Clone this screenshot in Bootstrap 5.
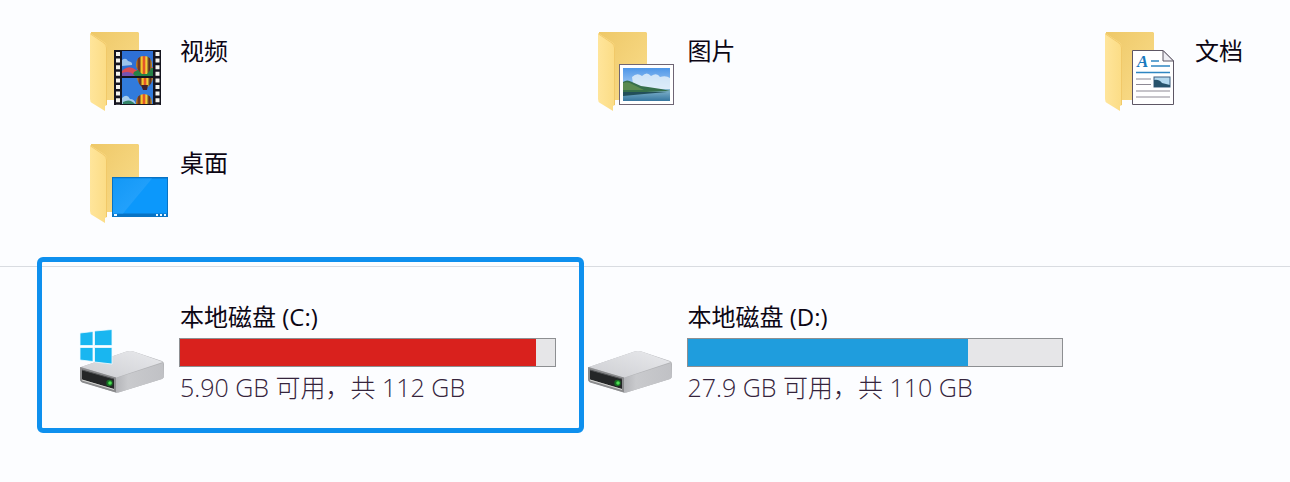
<!DOCTYPE html>
<html lang="zh-CN">
<head>
<meta charset="utf-8">
<meta name="viewport" content="width=device-width, initial-scale=1">
<title>此电脑</title>
<link href="https://cdn.jsdelivr.net/npm/bootstrap@5.3.0/dist/css/bootstrap.min.css" rel="stylesheet">
<script src="https://cdn.jsdelivr.net/npm/bootstrap@5.3.0/dist/js/bootstrap.bundle.min.js"></script>
<style>
  body { background: #fcfdff; color: #0c0614; font-family: "Open Sans", "Noto Sans CJK SC", sans-serif; font-size: 24px; line-height: 32px; }
  .tiles { display: grid; grid-template-columns: 5fr 5fr 2fr; padding-left: 72px; row-gap: 28px; }
  .folders { padding-top: 28px; padding-bottom: 42px; }
  .drives { padding-top: 34px; padding-bottom: 48px; border-top: 1px solid #d9dce1; }
  .tile { padding-left: 4px; color: inherit; }
  .tile-icon { width: 96px; height: 84px; }
  .tile-name { padding-top: 7px; }
  .drive-icon { margin-top: 13px; }
  .usage { height: 29px; margin: 5px 24px 4px -1px; border: 1px solid #8d8f92; border-radius: 0; background: #e6e6e8; }
  .usage-full { background: #d9211d; }
  .usage-ok { background: #1f9ddd; }
  .free-space { color: #35243c; font-size: 25px; font-weight: 300; }
  .highlight { inset: -44px -4px -30px -35px; border: 5px solid #0e90ee; border-radius: 6px; pointer-events: none; }
</style>
</head>
<body>
<svg width="0" height="0" class="position-absolute" aria-hidden="true">
  <defs>
    <linearGradient id="backFill" x1="0" y1="0" x2="1" y2="1"><stop offset="0" stop-color="#eec868"/><stop offset="1" stop-color="#fadd8b"/></linearGradient>
    <linearGradient id="flapFill" x1="0" y1="0" x2="1" y2="0"><stop offset="0" stop-color="#ffe59b"/><stop offset="1" stop-color="#fbdc85"/></linearGradient>
    <linearGradient id="screenFill" x1="0" y1="0" x2="1" y2="1"><stop offset="0" stop-color="#1398f6"/><stop offset="1" stop-color="#2ba6ff"/></linearGradient>
    <linearGradient id="skyFill" x1="0" y1="0" x2="0" y2="1"><stop offset="0" stop-color="#4d96e8"/><stop offset="1" stop-color="#e8f4fc"/></linearGradient>
    <linearGradient id="lakeFill" x1="0" y1="0" x2="0" y2="1"><stop offset="0" stop-color="#88b9d0"/><stop offset="1" stop-color="#36769f"/></linearGradient>
    <linearGradient id="topFill" x1="0" y1="1" x2="1" y2="0"><stop offset="0" stop-color="#cdced2"/><stop offset="1" stop-color="#e9eaed"/></linearGradient>
    <linearGradient id="sideFill" x1="0" y1="0" x2="1" y2="0"><stop offset="0" stop-color="#b4b5b9"/><stop offset=".25" stop-color="#c9cacd"/><stop offset="1" stop-color="#c0c1c5"/></linearGradient>
    <linearGradient id="balloonFill" x1="0" y1="0" x2="1" y2="0"><stop offset="0" stop-color="#d48a18"/><stop offset=".2" stop-color="#5c2220"/><stop offset=".36" stop-color="#ffda2c"/><stop offset=".5" stop-color="#db2e25"/><stop offset=".64" stop-color="#ffe13a"/><stop offset=".82" stop-color="#4b2024"/><stop offset="1" stop-color="#d99d22"/></linearGradient>
    <clipPath id="frameOne"><rect x="46" y="23" width="31" height="25"/></clipPath>
    <clipPath id="frameTwo"><rect x="46" y="50" width="31" height="26"/></clipPath>
    <symbol id="folder" viewBox="0 0 96 84">
      <path d="M15 4H62L63 5V72H15Z" fill="url(#backFill)"/>
      <path d="M14 5L28 14Q31 16 31 20V77L29 78V83L16 75Q14 74 14 71Z" fill="url(#flapFill)"/>
      <path d="M14.500 6L28 15Q30.500 17 30.500 20V77" fill="none" stroke="#efc462" stroke-width=".8"/>
    </symbol>
    <symbol id="drive" viewBox="0 0 96 84">
      <path d="M5 53L49 38Q54 36 59 38L86 47Q88 48 88 50V62Q88 64 86 65L44 78Q41 79 38 78L6 68Q4 67 4 65V54Z" fill="#b2b3b6"/>
      <path d="M5 53L49 38Q54 36 59 38L87 48L42 63Q40 64 37 63Z" fill="url(#topFill)"/>
      <path d="M40 64L87 49L88 62Q88 64 86 65L44 78L40 79Z" fill="url(#sideFill)"/>
      <path d="M4 53L40 63.500V78.500L6 68.500Q4 68 4 65Z" fill="#8a8b8d"/>
      <path d="M6 56L38 65V75L6 65.500Z" fill="#242627"/>
      <path d="M6 66L38 75.500" stroke="#d6d6d3" stroke-width="1"/>
      <path d="M6 56L38 65" stroke="#515355" stroke-width="1"/>
      <circle cx="33.500" cy="69" r="3.200" fill="#176d23"/><circle cx="34" cy="69" r="1.800" fill="#4de052"/>
    </symbol>
  </defs>
</svg>

<main class="min-vh-100">
  <section class="tiles folders" aria-label="文件夹">
    <a href="#videos" class="tile d-flex gap-2 text-decoration-none">
      <svg class="tile-icon flex-shrink-0" viewBox="0 0 96 84" aria-hidden="true">
        <use href="#folder"/>
        <rect x="38" y="22" width="47" height="55" fill="#15151f"/>
        <path d="M42 24V77M81.500 24V77" stroke="#f3f3ee" stroke-width="4" stroke-dasharray="4 2.600"/>
        <g clip-path="url(#frameOne)">
          <rect x="46" y="23" width="31" height="25" fill="#2e70d5"/>
          <path d="M46 32q4-3 6 1q5 1 4 4l-10 1z" fill="#9cc4ec"/>
          <path d="M46 43q7-7 14-1l17-3v10H46Z" fill="#d84b55"/><path d="M58 44q10-6 19-4v9H56z" fill="#258246"/>
          <path d="M46 45q8-3 13 3H46z" fill="#7652b0"/>
          <path d="M60 37Q60 28 68 28T76 37Q76 41 71 46H66Q60 41 60 37Z" fill="url(#balloonFill)"/>
        </g>
        <g clip-path="url(#frameTwo)">
          <rect x="46" y="50" width="31" height="26" fill="#317bdc"/>
          <path d="M61 50H77Q76 57 70 60H67Q62 56 61 50Z" fill="url(#balloonFill)"/>
          <path d="M65 57h7l-1 5h-4z" fill="#40212b"/>
          <path d="M46 70q5-5 8 1q5 0 6 6H46z" fill="#a6ccec"/>
          <path d="M47 74q7-4 12 2H47z" fill="#328367"/>
          <path d="M60 76Q60 66 68 66T76 76Z" fill="url(#balloonFill)"/>
        </g>
      </svg>
      <span class="tile-name text-nowrap">视频</span>
    </a>
    <a href="#pictures" class="tile d-flex gap-2 text-decoration-none">
      <svg class="tile-icon flex-shrink-0" viewBox="0 0 96 84" aria-hidden="true">
        <use href="#folder"/>
        <rect x="35.500" y="36.500" width="54" height="40" fill="#fff" stroke="#6e6575"/>
        <rect x="39" y="40" width="47" height="33" fill="url(#skyFill)"/>
        <path d="M48 49q5-5 10-1q5-5 9 0q6-4 9 1q6-2 10 1v12H50z" fill="#e7f2fa" opacity=".8"/>
        <rect x="39" y="61" width="47" height="12" fill="url(#lakeFill)"/>
        <path d="M39 54Q43 51 48 54L57 58L64 59L77 61L86 63L39 65Z" fill="#366f4b"/>
        <path d="M39 55q5-2 9 1l12 6H39z" fill="#5a8a50"/>
        <path d="M39 64H83L60 66L39 68Z" fill="#224f5a"/>
      </svg>
      <span class="tile-name text-nowrap">图片</span>
    </a>
    <a href="#documents" class="tile d-flex gap-2 text-decoration-none">
      <svg class="tile-icon flex-shrink-0" viewBox="0 0 96 84" aria-hidden="true">
        <use href="#folder"/>
        <path d="M41.500 22.500H72L82.500 33V76.500H41.500Z" fill="#fff" stroke="#5d5664"/>
        <path d="M72 22.500V33H82.500Z" fill="#eeeef3" stroke="#5d5664"/>
        <text x="46" y="39" font-family="Liberation Serif, serif" font-size="17" font-style="italic" font-weight="700" fill="#1979bd">A</text>
        <path d="M60 33H68M60 38H79M45 44.500H79" stroke="#2f86c2" stroke-width="1.500"/>
        <path d="M45 51H60M45 56.500H60M45 63H79M45 69H79" stroke="#8d8994"/>
        <rect x="63" y="49" width="16" height="10" fill="#b4d9ef" stroke="#3d5e80"/>
        <path d="M63 52q5-1 8 3l8 2v2H63z" fill="#28536c"/>
      </svg>
      <span class="tile-name text-nowrap">文档</span>
    </a>
    <a href="#desktop" class="tile d-flex gap-2 text-decoration-none">
      <svg class="tile-icon flex-shrink-0" viewBox="0 0 96 84" aria-hidden="true">
        <use href="#folder"/>
        <rect x="36" y="37" width="56" height="40" fill="#0873c4"/>
        <rect x="37" y="38.500" width="54" height="35" fill="#0c98fb"/>
        <path d="M37 38.500H76L47 73.500H37Z" fill="url(#screenFill)"/>
        <path d="M38 75h3M80 75h2M84 75h2M88 75h2" stroke="#e9f7ff" stroke-width="2"/>
      </svg>
      <span class="tile-name text-nowrap">桌面</span>
    </a>
  </section>

  <section class="tiles drives" aria-label="设备和驱动器">
    <div class="tile d-flex gap-2 position-relative">
      <svg class="tile-icon drive-icon flex-shrink-0" viewBox="0 0 96 84" aria-hidden="true">
        <use href="#drive"/>
        <path d="M4 19L17 17.500V31.500H4ZM18.500 17L36 15.500V31.500H18.500ZM4 33.500H17V47.500L4 46ZM18.500 33.500H36V50L18.500 48Z" fill="#19b6f0" stroke="#f3fbff" stroke-width=".8"/>
      </svg>
      <div class="flex-grow-1">
        <div id="drive-c">本地磁盘 (C:)</div>
        <div class="progress usage" role="progressbar" aria-labelledby="drive-c" aria-valuenow="95" aria-valuemin="0" aria-valuemax="100">
          <div class="progress-bar usage-full" style="width: 95%"></div>
        </div>
        <div class="free-space text-nowrap">5.90 GB 可用，共 112 GB</div>
      </div>
      <span class="highlight position-absolute"></span>
    </div>
    <div class="tile d-flex gap-2">
      <svg class="tile-icon drive-icon flex-shrink-0" viewBox="0 0 96 84" aria-hidden="true"><use href="#drive"/></svg>
      <div class="flex-grow-1">
        <div id="drive-d">本地磁盘 (D:)</div>
        <div class="progress usage" role="progressbar" aria-labelledby="drive-d" aria-valuenow="75" aria-valuemin="0" aria-valuemax="100">
          <div class="progress-bar usage-ok" style="width: 75%"></div>
        </div>
        <div class="free-space text-nowrap">27.9 GB 可用，共 110 GB</div>
      </div>
    </div>
  </section>
</main>
</body>
</html>
